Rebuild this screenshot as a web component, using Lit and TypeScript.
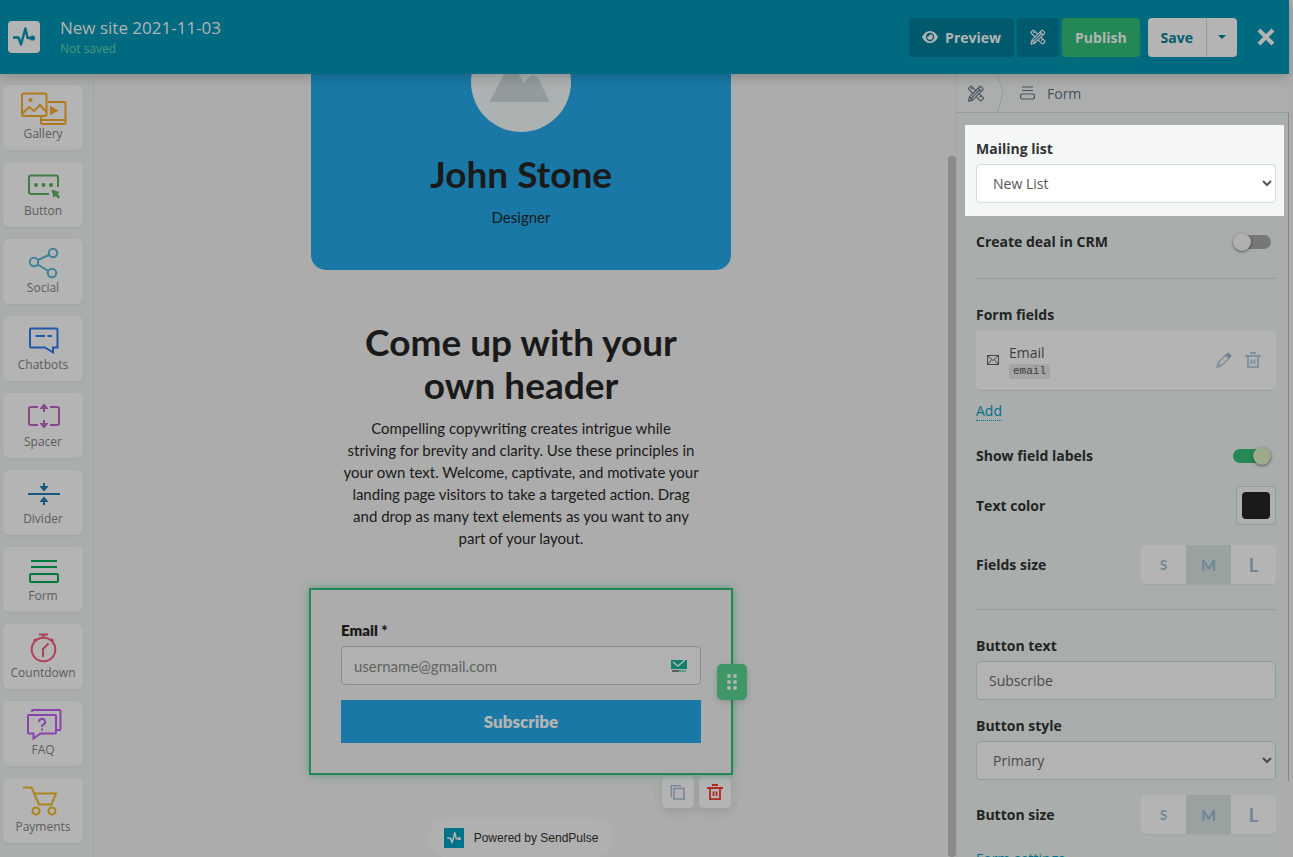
import { LitElement, html, css, svg } from "lit";
import { customElement, property, state } from "lit/decorators.js";

const tools = svg`
  <g fill="none" stroke="currentColor" stroke-width="1.15" stroke-linejoin="round" stroke-linecap="round">
    <path d="M7.200 4.800 L4 1.400 a.8 .8 0 0 0 -1.100 0 L1.300 3 a.8 .8 0 0 0 0 1.100 L4.600 7.500 M8.600 11.400 L11.900 14.700 a.8 .8 0 0 0 1.100 0 L14.700 13 a.8 .8 0 0 0 0 -1.100 L11.400 8.600 M5 2.600 L3.900 3.700 M12.700 10.200 L11.500 11.400"/>
    <path d="M11.400 1.600 a1 1 0 0 1 1.400 0 L14.400 3.200 a1 1 0 0 1 0 1.400 L4.800 14.200 L1 15.200 L1.900 11.200 Z M10 3 L13 6 M1.900 11.200 L4.800 14.200 M3.400 12.600 L10.800 5.200"/>
  </g>`;

const trash = svg`
  <g fill="none" stroke="currentColor" stroke-width="1.8">
    <path d="M0 4 H16 M5 1 H11 M3 5 V15.100 H13 V5 M6.500 7.500 V12 M9.500 7.500 V12"/>
  </g>`;

const pulse = svg`
  <path d="M5 16.5 H10.5 L13 23.5 L17.4 7.5 L19.6 17 H24" fill="none" stroke="currentColor" stroke-width="2.4" stroke-linejoin="round"/>
  <circle cx="24.5" cy="17" r="2.6" fill="currentColor"/>`;

const blocks = [
  {
    name: "Gallery", color: "#b27a1e",
    icon: svg`<path d="M28 10 H44 a1.500 1.500 0 0 1 1.500 1.500 V30.500 a1.500 1.500 0 0 1 -1.500 1.500 H22.500 a1.500 1.500 0 0 1 -1.500 -1.500 V25 M21 28 H45"/><rect x="2" y="1.500" width="24.500" height="22.500" rx="1.500"/><path d="M2 22 L9 15 L14 19 L20 13 L26.500 20"/><circle cx="10.500" cy="8" r="1" fill="currentColor"/><path d="M31 15.500 V21.500 L36.500 18.500 Z" fill="currentColor"/>`,
  },
  {
    name: "Button", color: "#437d43",
    icon: svg`<path d="M29 25 H11 a2 2 0 0 1 -2 -2 V8.500 a2 2 0 0 1 2 -2 H36 a2 2 0 0 1 2 2 V18"/><g fill="currentColor" stroke="none"><circle cx="16" cy="16" r="2"/><circle cx="23.500" cy="16" r="2"/><circle cx="31" cy="16" r="2"/><path d="M31.500 20.500 L39.500 23 L37.500 25 L40 28 L38.500 29.500 L35.500 27 L33.500 29 Z"/></g>`,
  },
  {
    name: "Social", color: "#3f8397",
    icon: svg`<circle cx="14" cy="16" r="4.200"/><circle cx="33" cy="7" r="4.200"/><circle cx="32" cy="27" r="4.200"/><path d="M18 14 L29 9 M17.500 18.500 L28.500 25"/>`,
  },
  {
    name: "Chatbots", color: "#2059a8",
    icon: svg`<path d="M11 5.500 H36.500 a1 1 0 0 1 1 1 V24.500 H33 V29.500 L25 24.500 H11 a1 1 0 0 1 -1 -1 V6.500 a1 1 0 0 1 1 -1 Z M15.500 13 H25 M27.500 13 H32"/>`,
  },
  {
    name: "Spacer", color: "#884889",
    icon: svg`<path d="M18 7 H11 a2 2 0 0 0 -2 2 V23 a2 2 0 0 0 2 2 H18 M30 7 H37 a2 2 0 0 1 2 2 V23 a2 2 0 0 1 -2 2 H30 M24 6 V12 M24 20 V26"/><path d="M21.500 8 L24 5 L26.500 8 Z M21.500 24 L24 27 L26.500 24 Z" fill="currentColor"/>`,
  },
  {
    name: "Divider", color: "#17597d",
    icon: svg`<path d="M8 17 H40 M24 6 V11 M24 23 V28"/><path d="M21.500 10 L24 13 L26.500 10 Z M21.500 24 L24 21 L26.500 24 Z" fill="currentColor"/>`,
  },
  {
    name: "Form", color: "#00783a",
    icon: svg`<path d="M11 7 H37 M11 13 H37"/><rect x="10" y="20" width="28" height="8" rx="1"/>`,
  },
  {
    name: "Countdown", color: "#b04056",
    icon: svg`<circle cx="23.500" cy="18.500" r="11.800"/><path d="M19 3.500 H28 M23.500 4 V7 M13.500 10 L16 8 M31 8 L33.500 10 M28.500 12.500 L23 18 V26"/>`,
  },
  {
    name: "FAQ", color: "#8a43ad",
    icon: svg`<path d="M9 7 H35 a1 1 0 0 1 1 1 V24.500 a1 1 0 0 1 -1 1 H20.500 L13.500 30.500 V25.500 H9 a1 1 0 0 1 -1 -1 V8 a1 1 0 0 1 1 -1 Z M12 4 V3 a1 1 0 0 1 1 -1 H39.500 a1 1 0 0 1 1 1 V21 a1 1 0 0 1 -1 1 H37"/><path d="M19 14 a3 3 0 1 1 4.200 2.600 q-1.200 .6 -1.200 2.400 M22 20.500 v2"/>`,
  },
  {
    name: "Payments", color: "#aa8519",
    icon: svg`<path d="M3 2.500 H11.500 L19 19.500 H31.500 L36 8.500 H14"/><circle cx="16" cy="26" r="3.500"/><circle cx="32" cy="26" r="3.500"/>`,
  },
];

@customElement("size-picker")
class SizePicker extends LitElement {
  @property() label = "";
  @state() value = "M";

  static styles = css`
    :host { display: block; }
    .row { display: flex; justify-content: space-between; align-items: center; }
    .title { font-weight: 700; line-height: 20px; color: #222424; }
    .group { display: flex; border-radius: 4px; overflow: hidden; background: #b4b4b4; box-shadow: 0 1px 1px #a0a5a4; }
    button { width: 45px; height: 39px; border: 0; padding: 0; background: transparent; color: #708597; font: 700 16px Lato, sans-serif; }
    .S { font-size: 13px; }
    .L { font-size: 18px; }
    .on { background: #9aa2a1; }
  `;

  render() {
    return html`<div class="row" role="group" aria-label=${this.label}>
      <span class="title">${this.label}</span>
      <div class="group">
        ${["S", "M", "L"].map((s) => html`<button class="${s} ${s === this.value ? "on" : ""}" @click=${() => (this.value = s)}>${s}</button>`)}
      </div>
    </div>`;
  }
}

@customElement("app-root")
class AppRoot extends LitElement {
  static styles = css`
    :host {
      display: flex; flex-direction: column; height: 100vh; overflow: hidden;
      box-sizing: border-box; padding-right: 4px; background: #acacac;
      font: 14px "Open Sans", "Noto Sans", sans-serif; color: #222424;
    }
    * { box-sizing: border-box; }
    button, input, select { font-family: inherit; font-size: inherit; margin: 0; }
    h1, h2, p { margin: 0; }
    svg { display: block; }

    .top {
      flex: none; display: flex; align-items: center; height: 74px; padding: 0 14px 0 8px;
      background: #006a80; color: #b4b4b4; position: relative; z-index: 2;
      box-shadow: 0 3px 12px rgba(0, 0, 0, 0.2);
    }
    .logo { width: 32px; height: 32px; border-radius: 4px; background: #b4b4b4; color: #006a80; }
    .site { flex: 1; margin-left: 20px; }
    .site-name { font-size: 17px; font-weight: 400; line-height: 24px; }
    .status { font-size: 12px; line-height: 18px; color: #489b7c; }
    .actions { display: flex; align-items: center; gap: 3px; }
    .btn {
      height: 39px; border: 0; border-radius: 4px; padding: 0 13px; display: flex; align-items: center; gap: 7px;
      font-weight: 700; color: #b4b4b4; background: #005a6d;
    }
    .publish { background: #238856; box-shadow: 0 4px 12px rgba(35, 136, 86, 0.2); }
    .split { display: flex; margin-left: 5px; }
    .split .btn { background: #b4b4b4; color: #005d70; }
    .split .save { border-radius: 4px 0 0 4px; }
    .split .more { border-radius: 0 4px 4px 0; border-left: 1px solid #969b9c; padding: 0 11px; }
    .close { border: 0; padding: 0; margin-left: 17px; background: none; color: #b4b4b4; }

    .work { flex: 1; min-height: 0; display: grid; grid-template-columns: 94px 1fr 8px 333px; }

    .blocks { display: flex; flex-direction: column; gap: 12px; padding: 11px 10px 0 3px; background: #a9adac; border-right: 1px solid #a2a7a6; overflow: hidden; }
    .block {
      flex: none; height: 65px; width: 80px; padding: 7px 0 0; border: 0; border-radius: 6px; background: #b4b4b4;
      box-shadow: 0 1px 2px rgba(120, 130, 128, 0.15);
      display: flex; flex-direction: column; align-items: center; color: #5c5c5c;
    }
    .block-icon { width: 48px; height: 33px; margin-left: 2px; fill: none; stroke: currentColor; stroke-width: 2; }
    .block span { font-size: 12px; line-height: 18px; }

    .canvas { overflow: hidden; display: flex; flex-direction: column; align-items: center; font-family: Lato, sans-serif; color: #1a1a1a; }
    .column { width: 420px; max-width: 100%; display: flex; flex-direction: column; text-align: center; font-size: 15px; line-height: 22px; }
    .card { margin-top: -92px; padding: 50px 30px 42px; border-radius: 15px; background: #1978a5; display: flex; flex-direction: column; align-items: center; }
    .avatar { width: 100px; height: 100px; border-radius: 50%; background: #acb1b2; }
    .big { font-size: 37px; line-height: 43px; font-weight: 700; }
    .card .big { margin-top: 20px; }
    .role { margin-top: 11px; }
    .heading { margin: 50px 30px 0; }
    .copy { margin: 11px 20px 0; }
    .form { position: relative; margin: 39px -2px 0; padding: 30px; border: 2px solid #238856; box-shadow: 0 0 8px rgba(35, 136, 86, 0.6); text-align: left; }
    .form label { display: block; font-size: 15px; line-height: 20px; font-weight: 800; }
    .field { display: flex; align-items: center; height: 39px; margin-top: 6px; padding-right: 12px; border: 1px solid #8b8d8d; border-radius: 4px; background: #b1b1b1; }
    .field input { flex: 1; min-width: 0; border: 0; outline: 0; padding: 0 12px; background: none; }
    .field input::placeholder { color: #616363; }
    .submit { display: block; width: 100%; height: 43px; margin-top: 15px; border: 0; background: #1978a5; color: #b4b4b4; font-weight: 800; font-size: 17px; }
    .drag { position: absolute; right: -16px; top: 74px; width: 30px; height: 36px; border: 0; padding: 0 10px; border-radius: 5px; background: #3f9768; color: #b4b4b4; box-shadow: 0 2px 6px rgba(0, 0, 0, 0.15); }
    .form-tools { display: flex; justify-content: flex-end; gap: 5px; margin-top: 1px; }
    .tool { width: 32px; height: 32px; border: 0; border-radius: 5px; padding: 8px; background: #b4b4b4; color: #788898; box-shadow: 0 3px 8px rgba(90, 100, 100, 0.25); }
    .delete { color: #ae2b21; }
    .powered { align-self: center; display: flex; align-items: center; gap: 10px; height: 40px; margin-top: 10px; padding: 0 15px; border-radius: 20px; background: #b0b0b0; color: #222; text-decoration: none; font: 12px "Liberation Sans", Arial, sans-serif; }
    .badge { width: 20px; height: 20px; background: #00728a; color: #b4b4b4; }

    .track { padding-top: 82px; }
    .thumb { height: 100%; border-radius: 4px; background: #8a8a8a; }

    .panel { min-height: 0; display: flex; flex-direction: column; overflow: hidden; background: #a9adac; border-left: 1px solid #a1a5a5; }
    .crumbs { flex: none; display: flex; align-items: center; height: 39px; padding-left: 10px; border-bottom: 1px solid #8f9d9e; background: #acaeae; color: #45525c; }
    .crumbs a { color: #4b565e; }
    .sep { margin: 0 16px 0 12px; color: #939c9d; }
    .crumb-name { margin-left: 12px; }
    .scroll { flex: 1; min-height: 0; display: flex; justify-content: space-between; }
    .bar { width: 1px; height: 668px; background: #868888; }
    .settings { flex: 1; padding: 12px 12px 0 19px; display: flex; flex-direction: column; }
    .settings > * { flex: none; }
    .settings label, .title { display: block; font-weight: 700; line-height: 20px; color: #222424; }
    .spot { margin: 0 -8px 0 -11px; padding: 14px 8px 13px 11px; background: #f4f7f6; }
    .settings .spot label { color: #303434; }
    .control { display: block; width: 100%; height: 39px; margin-top: 5px; padding: 0 12px; border: 1px solid #8f9d9b; border-radius: 4px; background: #b3b3b3; color: #484a4a; }
    .spot .control { background: #fff; border-color: #d0dfdd; color: #555; }
    .row { display: flex; justify-content: space-between; align-items: center; }
    .crm { margin-top: 16px; }
    hr { width: 100%; height: 1px; border: 0; margin: 26px 0; background: #929d9b; }
    .item { display: flex; align-items: center; height: 60px; margin-top: 5px; padding: 0 15px 0 11px; border-radius: 4px; background: #b4b4b4; box-shadow: 0 1px 1px #9da2a1; }
    .item-name { flex: 1; margin-left: 10px; line-height: 22px; color: #3a3e3e; }
    .code { display: block; width: max-content; padding: 0 4px; border-radius: 3px; background: #a4a4a4; color: #3c3c3c; font: 11px/15px "Liberation Mono", monospace; }
    .icon-btn { width: 16px; height: 16px; margin-left: 13px; padding: 0; border: 0; background: none; color: #7f8f9b; }
    .link { align-self: flex-start; color: #007288; line-height: 18px; text-decoration: none; border-bottom: 1px dotted #007288; }
    .add { margin-top: 12px; }
    .labels { margin-top: 25px; }
    .color-row, .size { margin-top: 20px; }
    .size + hr { margin-top: 25px; }
    .style-label { margin-top: 16px; }
    .button-size { margin-top: 15px; }
    .more-link { margin-top: 16px; }

    .switch { appearance: none; width: 38px; height: 14px; margin: 0 5px 0 0; border-radius: 7px; background: linear-gradient(90deg, transparent 7px, #777 7px); display: flex; align-items: center; }
    .switch::before { content: ""; width: 18px; height: 18px; border-radius: 50%; background: #b0b0b0; box-shadow: 0 1px 3px rgba(0, 0, 0, 0.5); flex: none; }
    .switch:checked { background: #238856; justify-content: flex-end; }
    .switch:checked::before { background: #9dab8c; }
    .swatch { appearance: none; width: 40px; height: 39px; padding: 5px; border: 1px solid #8f9d9b; border-radius: 4px; background: #b0b0b0; }
    .swatch::-webkit-color-swatch-wrapper { padding: 0; }
    .swatch::-webkit-color-swatch { border: 0; border-radius: 4px; }
  `;

  render() {
    return html`
      <header class="top">
        <svg class="logo" viewBox="0 0 32 32" aria-label="SendPulse">${pulse}</svg>
        <div class="site">
          <h1 class="site-name">New site 2021-11-03</h1>
          <div class="status">Not saved</div>
        </div>
        <div class="actions">
          <button class="btn">
            <svg width="16" height="12" viewBox="0 0 16 12"><path fill="currentColor" fill-rule="evenodd" d="M0 6 Q3 0 8 0 T16 6 Q13 12 8 12 T0 6 Z M8 1.800 a4.200 4.200 0 1 0 .01 0 Z"/><path fill="currentColor" d="M8 3.200 a2.800 2.800 0 1 1 -2.700 2 q1.800 .8 2.700 -2 Z"/></svg>
            Preview
          </button>
          <button class="btn" aria-label="Design"><svg width="16" height="16" viewBox="0 0 16 16">${tools}</svg></button>
          <button class="btn publish">Publish</button>
          <div class="split">
            <button class="btn save">Save</button>
            <button class="btn more" aria-label="More save options"><svg width="8" height="4" viewBox="0 0 8 4"><path d="M0 0 H8 L4 4 Z" fill="currentColor"/></svg></button>
          </div>
          <button class="close" aria-label="Close"><svg width="18" height="18" viewBox="0 0 18 18"><path d="M2 2 L16 16 M16 2 L2 16" stroke="currentColor" stroke-width="4"/></svg></button>
        </div>
      </header>
      <div class="work">
        <nav class="blocks" aria-label="Blocks">
          ${blocks.map((b) => html`<button class="block">
            <svg class="block-icon" style="color:${b.color}" viewBox="0 0 48 33">${b.icon}</svg>
            <span>${b.name}</span>
          </button>`)}
        </nav>

        <main class="canvas">
          <div class="column">
            <section class="card">
              <svg class="avatar" viewBox="0 0 100 100"><path d="M19 69 L36 37 Q40 33 44 37 L53 51 L57 46 Q62 41 67 46 L78 69 Q79 70 77 70 H19 Q17 70 19 69 Z" fill="#929c9d"/></svg>
              <h2 class="big">John Stone</h2>
              <p class="role">Designer</p>
            </section>
            <h2 class="big heading">Come up with your own header</h2>
            <p class="copy">Compelling copywriting creates intrigue while<br>striving for brevity and clarity. Use these principles in<br>your own text. Welcome, captivate, and motivate your<br>landing page visitors to take a targeted action. Drag<br>and drop as many text elements as you want to any<br>part of your layout.</p>
            <section class="form">
              <label for="mail">Email *</label>
              <div class="field">
                <input id="mail" type="email" placeholder="username@gmail.com">
                <svg width="18" height="14" viewBox="0 0 18 14"><path d="M1 1 H17 V10 H1 Z" fill="#10806c"/><path d="M3 3 L8 7 L15 1" fill="none" stroke="#b4b4b4" stroke-width="1.500"/><path d="M2 12 H9" stroke="#444" stroke-width="1.500"/><path d="M9 12 H16" stroke="#3f9787" stroke-width="1.500"/></svg>
              </div>
              <button class="submit">Subscribe</button>
              <button class="drag" aria-label="Move block"><svg width="10" height="16" viewBox="0 0 10 16" fill="currentColor"><circle cx="2" cy="2" r="2"/><circle cx="8" cy="2" r="2"/><circle cx="2" cy="8" r="2"/><circle cx="8" cy="8" r="2"/><circle cx="2" cy="14" r="2"/><circle cx="8" cy="14" r="2"/></svg></button>
            </section>
            <div class="form-tools">
              <button class="tool" aria-label="Duplicate"><svg width="16" height="16" viewBox="0 0 16 16" fill="none" stroke="currentColor" stroke-width="1.600"><path d="M4 4.500 H14 V15 H4 Z M1.300 13 V1.800 H11"/></svg></button>
              <button class="tool delete" aria-label="Delete"><svg width="16" height="16" viewBox="0 0 16 16">${trash}</svg></button>
            </div>
            <a class="powered" href="#"><svg class="badge" viewBox="0 0 32 32">${pulse}</svg>Powered by SendPulse</a>
          </div>
        </main>
        <div class="track"><div class="thumb"></div></div>

        <aside class="panel">
          <nav class="crumbs">
            <a href="#" aria-label="Design"><svg width="18" height="17" viewBox="0 0 16 16">${tools}</svg></a>
            <svg class="sep" width="7" height="38" viewBox="0 0 7 38"><path d="M0.500 0 L6 19 L0.500 38" fill="none" stroke="currentColor"/></svg>
            <svg width="15" height="14" viewBox="0 0 15 14" fill="none" stroke="currentColor" stroke-width="1.200"><path d="M2 1 H13 M2 4.500 H13"/><rect x="0.600" y="8" width="13.800" height="5" rx="1.500"/></svg>
            <span class="crumb-name">Form</span>
          </nav>
          <div class="scroll">
            <div class="settings">
              <div class="spot">
                <label for="list">Mailing list</label>
                <select id="list" class="control"><option>New List</option></select>
              </div>
              <div class="row crm"><label for="crm">Create deal in CRM</label><input id="crm" class="switch" type="checkbox"></div>
              <hr>
              <div class="title">Form fields</div>
              <div class="item">
                <svg width="12" height="10" viewBox="0 0 12 10" fill="none" stroke="#3d4a52"><rect x="0.500" y="0.500" width="11" height="9"/><path d="M1 1 L6 5.500 L11 1 M1 9 L4.500 4.500 M11 9 L7.500 4.500"/></svg>
                <div class="item-name">Email<code class="code">email</code></div>
                <button class="icon-btn" aria-label="Edit"><svg width="16" height="16" viewBox="0 0 16 16"><path d="M1 15 L2 11 L11.500 1.500 L14.500 4.500 L5 14 Z M2 11 L5 14" fill="none" stroke="currentColor" stroke-width="1.500"/><path d="M9.500 3.500 L12.500 0.500 L15.500 3.500 L12.500 6.500 Z" fill="#6d8192"/></svg></button>
                <button class="icon-btn" aria-label="Delete"><svg width="16" height="16" viewBox="0 0 16 16">${trash}</svg></button>
              </div>
              <a class="link add" href="#">Add</a>
              <div class="row labels"><label for="show">Show field labels</label><input id="show" class="switch" type="checkbox" checked></div>
              <div class="row color-row"><label for="color">Text color</label><input id="color" class="swatch" type="color" value="#1a1a1a"></div>
              <size-picker class="size" label="Fields size"></size-picker>
              <hr>
              <label for="btext">Button text</label>
              <input id="btext" class="control" type="text" .value=${"Subscribe"}>
              <label class="style-label" for="bstyle">Button style</label>
              <select id="bstyle" class="control"><option>Primary</option></select>
              <size-picker class="size button-size" label="Button size"></size-picker>
              <a class="link more-link" href="#">Form settings</a>
            </div>
            <div class="bar"></div>
          </div>
        </aside>
      </div>
    `;
  }
}
